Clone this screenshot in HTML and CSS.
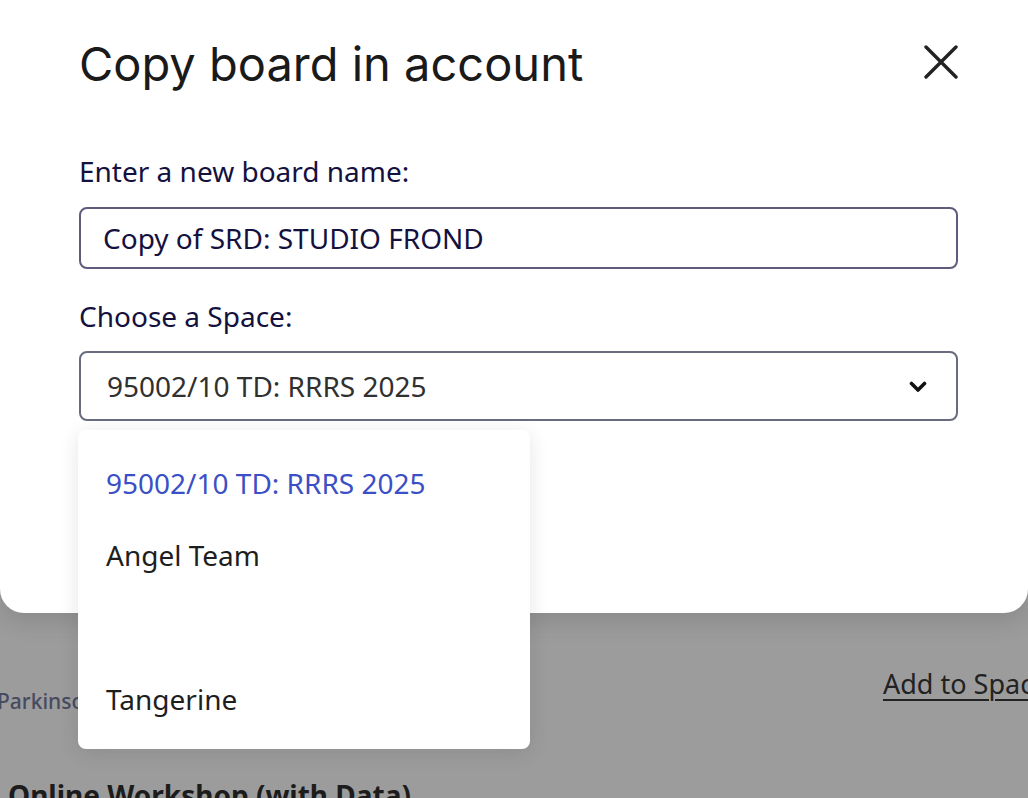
FILE: index.html
```html
<!DOCTYPE html>
<html>
<head>
<meta charset="utf-8">
<link rel="stylesheet" href="styles.css">
</head>
<body>
<div class="page">
  <div class="row">
    <span class="owner">Parkinson</span>
    <a class="add-link" href="#">Add to Space</a>
  </div>
  <h2 class="board-title">Online Workshop (with Data)</h2>
</div>

<div class="modal">
  <div class="modal-head">
    <h1 class="modal-title">Copy board in account</h1>
    <button class="close" aria-label="Close">
      <svg width="34" height="34" viewBox="0 0 34 34"><path d="M2 2 L32 32 M32 2 L2 32" stroke="#222" stroke-width="3.4" stroke-linecap="round" fill="none"/></svg>
    </button>
  </div>
  <label class="field-label">Enter a new board name:</label>
  <div class="text-input">Copy of SRD: STUDIO FROND</div>
  <label class="field-label second">Choose a Space:</label>
  <div class="select-wrap">
    <div class="select">
      <span>95002/10 TD: RRRS 2025</span>
      <svg class="chev" width="18" height="12" viewBox="0 0 18 12"><path d="M2.5 2.5 L9 9 L15.5 2.5" stroke="#111" stroke-width="3.6" stroke-linecap="round" stroke-linejoin="round" fill="none"/></svg>
    </div>
    <ul class="menu">
      <li class="item active">95002/10 TD: RRRS 2025</li>
      <li class="item">Angel Team</li>
      <li class="item">&nbsp;</li>
      <li class="item">Tangerine</li>
    </ul>
  </div>
</div>
</body>
</html>
```
FILE: styles.css
```css
html, body {
  margin: 0;
  padding: 0;
}
body {
  width: 1028px;
  height: 798px;
  overflow: hidden;
  background: #9c9c9c;
  font-family: "Noto Sans", "Open Sans", sans-serif;
  position: relative;
}
.page {
  padding-top: 664px;
}
.row {
  display: flex;
  justify-content: space-between;
  align-items: flex-start;
}
.owner {
  margin-left: -3px;
  margin-top: 23px;
  font-size: 21px;
  color: #474b5f;
  font-weight: 500;
}
.add-link {
  margin-right: -130px;
  margin-top: 1px;
  font-size: 27px;
  color: #222;
  text-decoration: underline;
  text-underline-offset: 5px;
  text-decoration-thickness: 2px;
  width: 275px;
}
.board-title {
  margin: 62px 0 0 8px;
  font-size: 28px;
  line-height: 36px;
  font-weight: 700;
  color: #1c1c1c;
}
.modal {
  position: absolute;
  top: 0;
  left: 0;
  right: 0;
  height: 613px;
  box-sizing: border-box;
  background: #fff;
  border-radius: 0 0 24px 24px;
  box-shadow: 0 8px 24px rgba(0,0,0,0.12);
  padding: 34px 70px 0 79px;
}
.modal-head {
  display: flex;
  justify-content: space-between;
  align-items: flex-start;
}
.modal-title {
  margin: 0;
  font-family: "Inter", "Liberation Sans", sans-serif;
  font-weight: 400;
  font-size: 47px;
  line-height: 60px;
  color: #1a1a1a;
  letter-spacing: 0;
}
.close {
  border: none;
  background: none;
  padding: 0;
  margin: 11px 0 0 0;
  width: 34px;
  height: 34px;
  display: flex;
}
.field-label {
  display: block;
  margin-top: 59px;
  font-size: 28px;
  line-height: 36px;
  color: #14113f;
}
.field-label.second {
  margin-top: 29px;
}
.text-input {
  margin-top: 18px;
  height: 62px;
  box-sizing: border-box;
  border: 2px solid #5f5b7c;
  border-radius: 8px;
  padding: 0 22px;
  display: flex;
  align-items: center;
  font-size: 28px;
  color: #14113f;
}
.select-wrap {
  position: relative;
  margin-top: 17px;
}
.select {
  height: 70px;
  box-sizing: border-box;
  border: 2px solid #686c7e;
  border-radius: 8px;
  padding: 0 29px 0 26px;
  display: flex;
  align-items: center;
  justify-content: space-between;
  font-size: 28px;
  color: #303030;
}
.chev {
  margin-top: 2px;
}
.menu {
  position: absolute;
  top: 79px;
  left: -1px;
  width: 452px;
  margin: 0;
  padding: 17px 0 14px 0;
  list-style: none;
  background: #fff;
  border-radius: 8px;
  box-shadow: 0 4px 20px rgba(40,40,70,0.12);
  box-sizing: border-box;
}
.item {
  height: 72px;
  display: flex;
  align-items: center;
  padding-left: 28px;
  font-size: 28px;
  color: #1e1e1e;
}
.item.active {
  color: #3b4fc6;
}
```
